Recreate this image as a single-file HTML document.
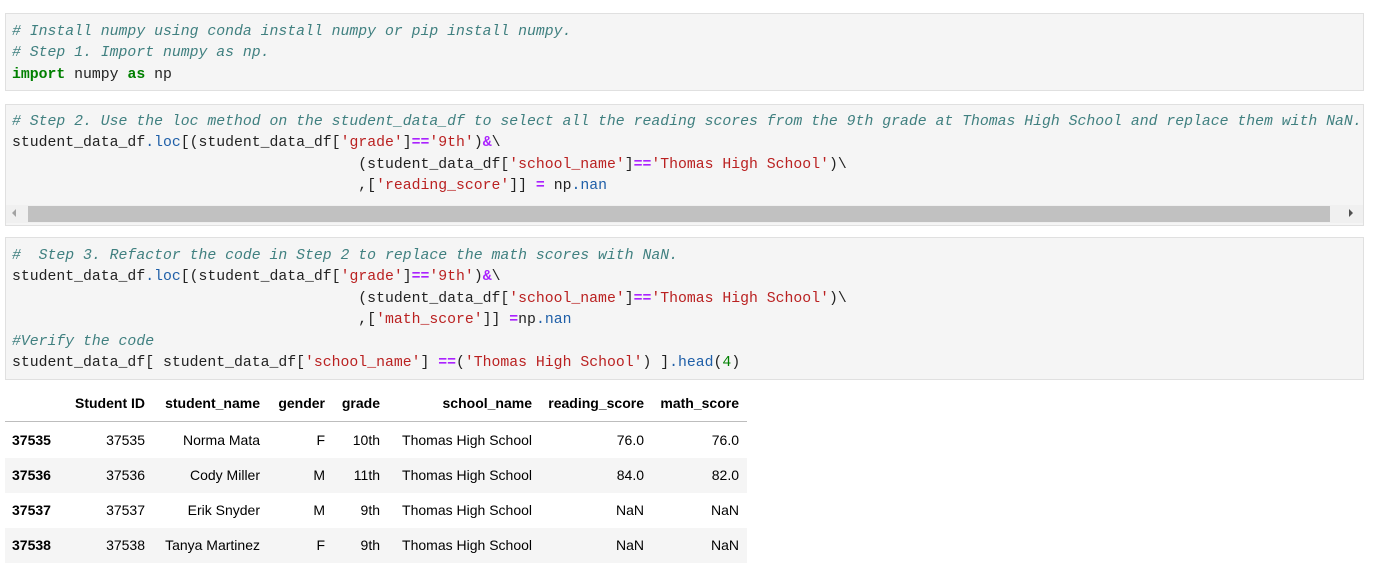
<!DOCTYPE html>
<html><head><meta charset="utf-8"><style>
body{margin:0;width:1382px;height:586px;background:#fff;position:relative;overflow:hidden;font-family:"Liberation Sans",sans-serif;}
.cell{position:absolute;left:5px;width:1357px;background:#f5f5f5;border:1px solid #e0e0e0;overflow:hidden;}
pre{margin:0;position:absolute;left:6px;font-family:"Liberation Mono",monospace;font-size:14.8px;line-height:21.4px;color:#222;white-space:pre;}
.c{color:#408080;font-style:italic}
.k{color:#008000;font-weight:bold}
.s{color:#ba2121}
.o{color:#aa22ff;font-weight:bold}
.a{color:#1f5fa8}
.n{color:#008000}
.t{position:absolute;font-size:14px;color:#000;white-space:nowrap}
.h{font-weight:bold}
.row{position:absolute;left:5px;width:742px;height:35px;}
</style></head><body>
<div class="cell" style="top:13px;height:76px">
<pre style="top:8px"><span class="c"># Install numpy using conda install numpy or pip install numpy.</span>
<span class="c"># Step 1. Import numpy as np.</span>
<span class="k">import</span> numpy <span class="k">as</span> np</pre></div>

<div class="cell" style="top:104px;height:120px">
<pre style="top:7px"><span class="c"># Step 2. Use the loc method on the student_data_df to select all the reading scores from the 9th grade at Thomas High School and replace them with NaN.</span>
student_data_df<span class="a">.loc</span>[(student_data_df[<span class="s">'grade'</span>]<span class="o">==</span><span class="s">'9th'</span>)<span class="o">&amp;</span>\
                                       (student_data_df[<span class="s">'school_name'</span>]<span class="o">==</span><span class="s">'Thomas High School'</span>)\
                                       ,[<span class="s">'reading_score'</span>]] <span class="o">=</span> np<span class="a">.nan</span></pre>
<div style="position:absolute;left:0;top:100px;width:1357px;height:18px;background:#f0f0f0"></div>
<div style="position:absolute;left:22px;top:101px;width:1302px;height:16px;background:#c1c1c1"></div>
<div style="position:absolute;left:6px;top:104px;width:0;height:0;border-top:4px solid transparent;border-bottom:4px solid transparent;border-right:4px solid #a3a3a3"></div>
<div style="position:absolute;left:1343px;top:104px;width:0;height:0;border-top:4px solid transparent;border-bottom:4px solid transparent;border-left:4px solid #505050"></div>
</div>

<div class="cell" style="top:237px;height:141px">
<pre style="top:8px"><span class="c">#  Step 3. Refactor the code in Step 2 to replace the math scores with NaN.</span>
student_data_df<span class="a">.loc</span>[(student_data_df[<span class="s">'grade'</span>]<span class="o">==</span><span class="s">'9th'</span>)<span class="o">&amp;</span>\
                                       (student_data_df[<span class="s">'school_name'</span>]<span class="o">==</span><span class="s">'Thomas High School'</span>)\
                                       ,[<span class="s">'math_score'</span>]] <span class="o">=</span>np<span class="a">.nan</span>
<span class="c">#Verify the code</span>
student_data_df[ student_data_df[<span class="s">'school_name'</span>] <span class="o">==</span>(<span class="s">'Thomas High School'</span>) ]<span class="a">.head</span>(<span class="n">4</span>)</pre></div>

<div style="position:absolute;left:5px;top:421px;width:742px;height:1px;background:#bdbdbd"></div>
<div class="row" style="top:458px;background:#f5f5f5"></div>
<div class="row" style="top:528px;background:#f5f5f5"></div>

<div id="tbl"></div>
<script>
var cols=[[145,'Student ID'],[260,'student_name'],[325,'gender'],[380,'grade'],[532,'school_name'],[644,'reading_score'],[739,'math_score']];
var rows=[['37535','37535','Norma Mata','F','10th','Thomas High School','76.0','76.0'],
['37536','37536','Cody Miller','M','11th','Thomas High School','84.0','82.0'],
['37537','37537','Erik Snyder','M','9th','Thomas High School','NaN','NaN'],
['37538','37538','Tanya Martinez','F','9th','Thomas High School','NaN','NaN']];
var h='';
cols.forEach(function(c){h+='<div class="t h" style="top:395px;right:'+(1382-c[0])+'px">'+c[1]+'</div>';});
rows.forEach(function(r,i){var y=432+35*i;
h+='<div class="t h" style="top:'+y+'px;left:12px">'+r[0]+'</div>';
for(var j=1;j<8;j++){h+='<div class="t" style="top:'+y+'px;right:'+(1382-cols[j-1][0])+'px">'+r[j]+'</div>';}
});
document.getElementById('tbl').innerHTML=h;
</script>
</body></html>
